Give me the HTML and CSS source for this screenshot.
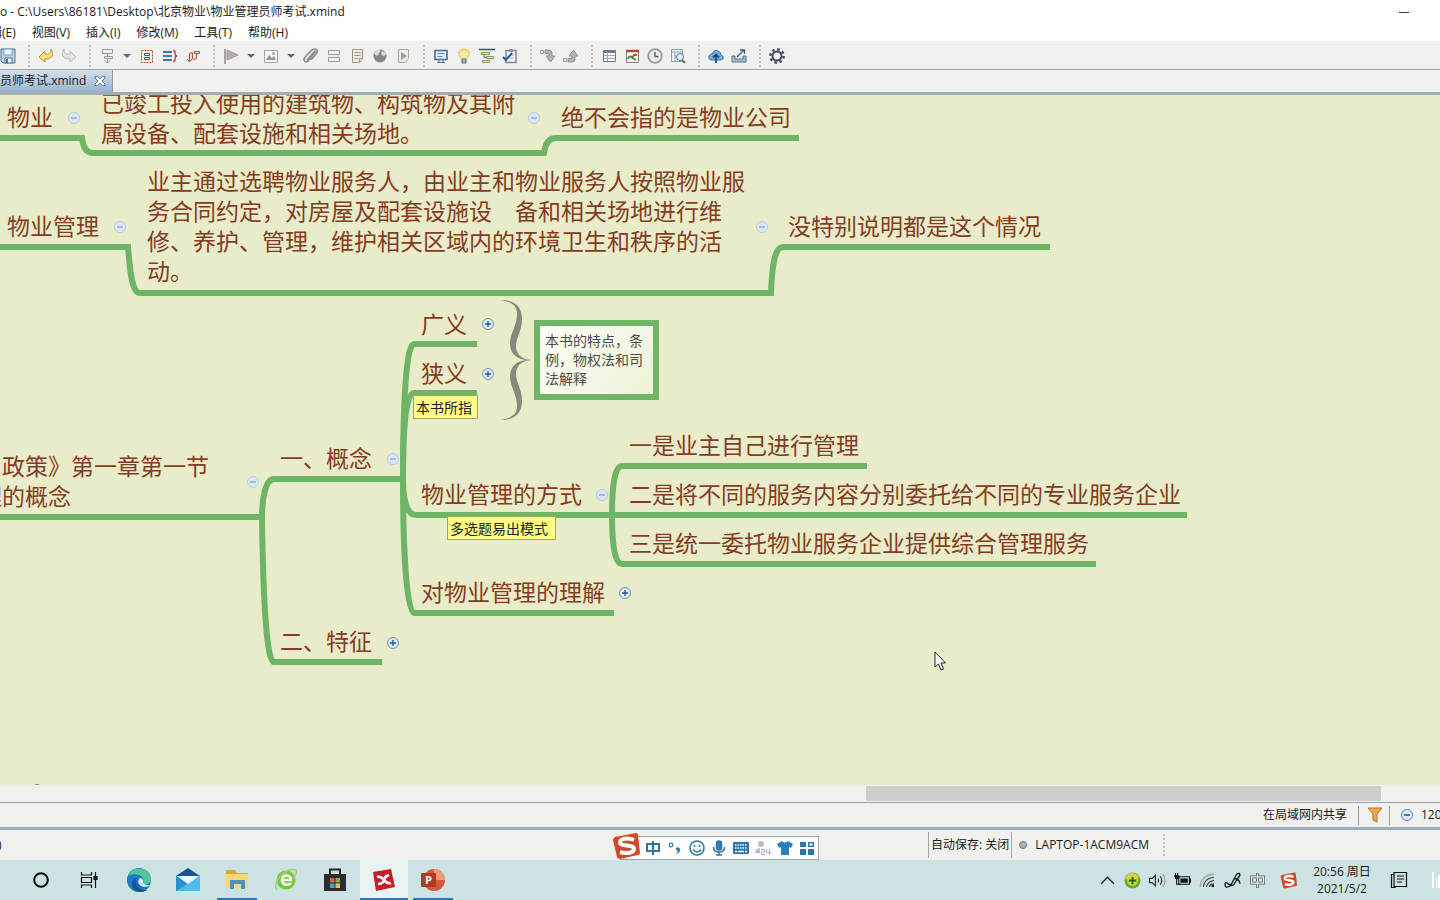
FILE: index.html
```html
<!DOCTYPE html>
<html lang="zh-CN">
<head>
<meta charset="utf-8">
<title>物业管理员师考试.xmind</title>
<link rel="stylesheet" href="styles.css">
</head>
<body>
<svg class="defs" aria-hidden="true">
  <symbol id="minus" viewBox="0 0 14 14"><circle cx="7" cy="7" r="5.5" fill="#dbe6f2" stroke="#b5cbe8"/><path d="M4 7h6" stroke="#8cabdc" stroke-width="1.4"/></symbol>
  <symbol id="plus" viewBox="0 0 14 14"><circle cx="7" cy="7" r="5.5" fill="#dcebf5" stroke="#6f92bd"/><path d="M4 7h6M7 4v6" stroke="#28508e" stroke-width="1.3"/></symbol>
  <symbol id="sogou" viewBox="0 0 28 28"><path d="M3 5 24 1q2 0 2 2l2 18q0 2-2 2L8 27q-2 0-3-2L1 8q0-2 2-3z" fill="#d2492a"/><path d="M22 8C15 5 7 7 8 11c1 4 14 1 14 6 0 4-8 5-14 3" fill="none" stroke="#fff" stroke-width="4"/></symbol>
</svg>
<div class="app">
  <header class="titlebar">
    <span class="title">o - C:\Users\86181\Desktop\北京物业\物业管理员师考试.xmind</span>
    <button class="minimize" aria-label="最小化"></button>
  </header>
  <nav class="menu">
    <button>编辑(E)</button><button>视图(V)</button><button>插入(I)</button><button>修改(M)</button><button>工具(T)</button><button>帮助(H)</button>
  </nav>
  <div class="toolbar">
    <button aria-label="保存"><svg viewBox="0 0 16 16"><path d="M1 1h14v14H3l-2-2z" fill="#b9cfe3" stroke="#54759b"/><path d="M4 1h8v6H4z" fill="#f5f8fb" stroke="#7f98b4"/><path d="M5 10h7v5H5z" fill="#e6edf4" stroke="#54759b"/><path d="M6 11h2v4H6z" fill="#54759b"/></svg></button>
    <i class="sep"></i>
    <button aria-label="撤销"><svg viewBox="0 0 16 16"><path d="M1 9l6-6v3c4 1 6-1 6-5 3 5 2 10-6 10v3z" fill="#f8e27a" stroke="#b8902f"/></svg></button>
    <button aria-label="重做"><svg viewBox="0 0 16 16"><path d="M15 9L9 3v3C5 7 3 5 3 1c-3 5-2 10 6 10v3z" fill="#e2e2e0" stroke="#b9b9b7"/></svg></button>
    <i class="sep"></i>
    <button aria-label="主题"><svg viewBox="0 0 16 16" fill="none" stroke="#999"><path d="M3.500 1.500h10v4h-10zM5.500 8.500h8v2h-8zM8.500 5.500v3M8.500 10.500v4M5.500 12l3 3 3-3"/></svg></button>
    <button class="drop" aria-label="主题选项"></button>
    <button aria-label="外框"><svg viewBox="0 0 16 16" fill="none"><path d="M2.500 2.500h11v12h-11z" stroke="#b24b35" stroke-dasharray="2 1"/><path d="M5.500 5.500h5v2h-5zM5.500 9.500h5v2h-5z" stroke="#4a5f76"/></svg></button>
    <button aria-label="概要"><svg viewBox="0 0 16 16" fill="none"><path d="M1 4h9M1 8h9M1 12h9" stroke="#4a76a8" stroke-width="2"/><path d="M11 2.500q2 0 2 2v1q0 2 2 2.500-2 .5-2 2.500v1q0 2-2 2" stroke="#c43d68" stroke-width="1.5"/></svg></button>
    <button aria-label="联系"><svg viewBox="0 0 16 16" fill="none"><path d="M4.500 13V7q.5-3 3-2v5q2 3 4 0V6" stroke="#c04a38" stroke-width="1.200"/><path d="M2 11l2.500 3L7 11" stroke="#c04a38"/><path d="M9.500 3.500h5v2h-5z" stroke="#596b80"/></svg></button>
    <i class="sep"></i>
    <button aria-label="标记"><svg viewBox="0 0 16 16"><path d="M2 1v15" stroke="#a7a19f" stroke-width="2"/><path d="M4 2l11 5-11 5z" fill="#b9abab" stroke="#a79c9b"/></svg></button>
    <button class="drop" aria-label="标记选项"></button>
    <button aria-label="图片"><svg viewBox="0 0 16 16"><path d="M1.500 2.500h13v12h-13z" fill="#f5f5f4" stroke="#a0a5a8"/><path d="M3 12l3-5 3 3 2-2 2 4z" fill="#8e959a"/><circle cx="10.500" cy="5.500" r="1.500" fill="#a0a5a8"/></svg></button>
    <button class="drop" aria-label="图片选项"></button>
    <button aria-label="附件"><svg viewBox="0 0 16 16" fill="none" stroke="#8f8f8f" stroke-width="1.700"><path d="M4 12l7-8q2-2 1 0l-7 9q-3 2-4-1 0-2 2-4l6-6q3-2 5 0 1 2-1 4l-5 6"/></svg></button>
    <button aria-label="标签"><svg viewBox="0 0 16 16" fill="none" stroke="#999"><path d="M2.500 2.500h11v4h-11zM2.500 9.500h11v4h-11z"/></svg></button>
    <button aria-label="备注"><svg viewBox="0 0 16 16" fill="#efece0" stroke="#9b978a"><path d="M3.500 1.500h10v9l-3 4h-7zM5.500 4.500h6M5.500 7.500h6M5.500 10.500h4M10.500 14v-3.500h3"/></svg></button>
    <button aria-label="超链接"><svg viewBox="0 0 16 16"><circle cx="8" cy="8" r="6.500" fill="#858789"/><path d="M3 4q2-3 5-2 1 2-1 3L6 8 3 7zM10 3q4 1 4 4l-3 1-2-2z" fill="#d8d8d7"/></svg></button>
    <button aria-label="录音"><svg viewBox="0 0 16 16"><path d="M3.500 1.500h10v9l-3 4h-7z" fill="#eeece5" stroke="#aaa79f"/><path d="M6 4l6 4-6 4z" fill="#9c9c98"/></svg></button>
    <i class="sep"></i>
    <button aria-label="演示"><svg viewBox="0 0 16 16"><path d="M2 2.500h12v9H2z" fill="#e4edf8" stroke="#4e6a93" stroke-width="1.600"/><path d="M4.500 5.500h7M4.500 8.500h5" stroke="#5c82b5"/><path d="M6 12v2M10 12v2M4 14.500h8" stroke="#4e6a93" fill="none"/></svg></button>
    <button aria-label="头脑风暴"><svg viewBox="0 0 16 16"><path d="M6 11C1 8 2 1 8 1s7 7 2 10z" fill="#fae9a0" stroke="#e8b94b"/><path d="M6 11h4v4H6zM6 13h4" fill="#ddd" stroke="#5b6678"/></svg></button>
    <button aria-label="甘特图"><svg viewBox="0 0 16 16" fill="#f3f5c6"><path d="M0 1.500h16" stroke="#34516f" stroke-width="1.500"/><path d="M2.500 4.500h8v2h-8zM7.500 8.500h7v2h-7zM3.500 12.500h7v2h-7z" stroke="#83975b"/><path d="M5 6.500v3h2" stroke="#4c7090" fill="none"/></svg></button>
    <button aria-label="任务"><svg viewBox="0 0 16 16"><path d="M4 2.500h10v12H4z" fill="#f1f3f5" stroke="#7f8990" stroke-width="1.500"/><path d="M7 1h4v3H7z" fill="#8b939b"/><path d="M8 7h4M8 10h4" stroke="#a5adb4"/><path d="M1 9l3 3 6-7" fill="none" stroke="#245b98" stroke-width="2"/></svg></button>
    <i class="sep"></i>
    <button aria-label="下钻"><svg viewBox="0 0 16 16"><path d="M.5 2.500h3v3h-3z" fill="none" stroke="#999"/><path d="M5 2h4q3 0 3 3v3h3l-4.500 6L6 8h3V5.500H5z" fill="#b1b4b1" stroke="#8f938f"/></svg></button>
    <button aria-label="上钻"><svg viewBox="0 0 16 16"><path d="M.5 10.500h3v3h-3z" fill="none" stroke="#999"/><path d="M5 14h4q3 0 3-3V8h3l-4.500-6L6 8h3v2.500H5z" fill="#b1b4b1" stroke="#8f938f"/></svg></button>
    <i class="sep"></i>
    <button aria-label="大纲"><svg viewBox="0 0 16 16"><path d="M2.500 2.500h12v11h-12z" fill="#fbfbfb" stroke="#6d7a89"/><path d="M2 4h13" stroke="#6d7a89" stroke-width="2"/><path d="M3 7.500h11M3 10.500h11M6.500 4v9" stroke="#97a8b8"/></svg></button>
    <button aria-label="风格"><svg viewBox="0 0 16 16"><path d="M2.500 2.500h12v12h-12z" fill="#faf9f2" stroke="#8c8069"/><path d="M2 3h13" stroke="#b5482f" stroke-width="2.500"/><path d="M4 11q1-4 4-2l4-3M7 9l5 3" stroke="#3b8750" stroke-width="1.800" fill="none"/><path d="M9 6h4v2H9z" fill="#c1563b"/></svg></button>
    <button aria-label="历史"><svg viewBox="0 0 16 16"><circle cx="8" cy="8" r="6.800" fill="#ececeb" stroke="#999b9c" stroke-width="1.800"/><path d="M8 4v4.500h3.500" stroke="#555" fill="none" stroke-width="1.300"/></svg></button>
    <button aria-label="查找"><svg viewBox="0 0 16 16"><path d="M1.500 1.500h11v12h-11zM2 4h10M5 4v9M5 8h5" fill="#f5f8fa" stroke="#8c9bab"/><circle cx="10" cy="9" r="3.500" fill="#e4f0f8" stroke="#54759b"/><path d="M12 12l3 3" stroke="#7c5f52" stroke-width="1.800"/></svg></button>
    <i class="sep"></i>
    <button aria-label="上传"><svg viewBox="0 0 16 16"><path d="M4 12Q0 12 1 8q1-2 3-2 2-5 6-3 3 1 3 4 3 1 2 4-1 1-3 1z" fill="#74aed9" stroke="#3d75a4"/><path d="M8 15V7M5 9.500l3-3 3 3" fill="none" stroke="#174c7c" stroke-width="1.800"/></svg></button>
    <button aria-label="分享"><svg viewBox="0 0 16 16" fill="none"><path d="M1 8v6h14V8h-3v3H4V8z" fill="#a5bbcd" stroke="#58728c"/><path d="M6 9l7-7M9 2h4.500v4" stroke="#405b76" stroke-width="1.300"/></svg></button>
    <i class="sep"></i>
    <button aria-label="设置"><svg viewBox="0 0 16 16" fill="none" stroke="#3b4a60"><circle cx="8" cy="8" r="4.500" stroke-width="2"/><circle cx="8" cy="8" r="6.700" stroke-width="2.400" stroke-dasharray="2.600 2.660"/></svg></button>
  </div>
  <div class="tabs">
    <div class="tab"><span>员师考试.xmind</span><button aria-label="关闭"><svg viewBox="0 0 12 12"><path d="M1 1.500h2.500L6 4l2.500-2.500H11V3L8 6l3 3v1.500H8.500L6 8l-2.500 2.500H1V9l3-3-3-3z" fill="#fff" stroke="#5e6b78"/></svg></button></div>
  </div>
  <main class="canvas">
    <svg class="links" aria-hidden="true"><g transform="translate(0 -95)">
      <g fill="none" stroke="#6fb566" stroke-width="6">
        <path d="M0 138H82C83 147 86 153 93 153H544C545 145 548 138 556 138H799"/>
        <path d="M0 247H128C130 272 132 293 140 293H771C772 268 774 247 783 247H1050"/>
        <path d="M0 517H262C262 500 265 479 274 479H403"/>
        <path d="M262 517C263 590 266 662 274 662H382"/>
        <path d="M403 479C403 420 405 344 414 344H477"/>
        <path d="M403 479C403 435 405 393 414 393H477"/>
        <path d="M403 479C403 500 407 515 416 515H1187"/>
        <path d="M403 479C403 540 406 613 414 613H614"/>
        <path d="M867 466H622C614 466 612 490 612 515C612 540 614 564 622 564H1096"/>
      </g>
      <g fill="#858b7c">
        <path d="M501 300C516 300 522 308 522 319C522 331 516 338 516 346C516 355 522 359 531 360C518 361 510 354 510 344C510 333 517 326 517 314C517 306 512 302 501 300Z"/>
        <path d="M501 420C516 420 522 412 522 401C522 389 516 382 516 374C516 365 522 361 531 360C518 359 510 366 510 376C510 387 517 394 517 406C517 414 512 418 501 420Z"/>
      </g>
      <path d="M34 785q3-2 6 0z" fill="#8a8c70"/>
    </g></svg>

    <div class="node n1">物业</div>
    <div class="node n2">已竣工投入使用的建筑物、构筑物及其附<br>属设备、配套设施和相关场地。</div>
    <div class="node n3">绝不会指的是物业公司</div>
    <div class="node n4">物业管理</div>
    <div class="node n5">业主通过选聘物业服务人，由业主和物业服务人按照物业服<br>务合同约定，对房屋及配套设施设　备和相关场地进行维<br>修、养护、管理，维护相关区域内的环境卫生和秩序的活<br>动。</div>
    <div class="node n6">没特别说明都是这个情况</div>
    <div class="node n7">与政策》第一章第一节<br>理的概念</div>
    <div class="node n8">一、概念</div>
    <div class="node n9">二、特征</div>
    <div class="node n10">广义</div>
    <div class="node n11">狭义</div>
    <div class="node n12">物业管理的方式</div>
    <div class="node n13">对物业管理的理解</div>
    <div class="node n14">一是业主自己进行管理</div>
    <div class="node n15">二是将不同的服务内容分别委托给不同的专业服务企业</div>
    <div class="node n16">三是统一委托物业服务企业提供综合管理服务</div>
    <div class="summary">本书的特点，条<br>例，物权法和司<br>法解释</div>
    <div class="label l1">本书所指</div>
    <div class="label l2">多选题易出模式</div>

    <button class="fold f1" aria-label="收起"><svg><use href="#minus"/></svg></button>
    <button class="fold f2" aria-label="收起"><svg><use href="#minus"/></svg></button>
    <button class="fold f3" aria-label="收起"><svg><use href="#minus"/></svg></button>
    <button class="fold f4" aria-label="收起"><svg><use href="#minus"/></svg></button>
    <button class="fold f5" aria-label="收起"><svg><use href="#minus"/></svg></button>
    <button class="fold f6" aria-label="收起"><svg><use href="#minus"/></svg></button>
    <button class="fold f7" aria-label="收起"><svg><use href="#minus"/></svg></button>
    <button class="fold f8" aria-label="展开"><svg><use href="#plus"/></svg></button>
    <button class="fold f9" aria-label="展开"><svg><use href="#plus"/></svg></button>
    <button class="fold f10" aria-label="展开"><svg><use href="#plus"/></svg></button>
    <button class="fold f11" aria-label="展开"><svg><use href="#plus"/></svg></button>
    <svg class="cursor" viewBox="0 0 13 20"><path d="M1 1v15l3.500-3 2.500 6 2.500-1-2.500-6h4.500z" fill="#fff" stroke="#222"/></svg>
  </main>
  <div class="scroll"><div class="thumb"></div></div>
  <div class="status">
    <span>在局域网内共享</span><i class="rule"></i>
    <button class="filter" aria-label="筛选"><svg viewBox="0 0 16 16"><path d="M1 1h14l-5 6v8l-4-2V7z" fill="#f0a44b" stroke="#b8732c"/></svg></button>
    <i class="rule"></i>
    <button class="zoomout" aria-label="缩小"><svg viewBox="0 0 14 14"><circle cx="7" cy="7" r="5.500" fill="#dcebf5" stroke="#6386ab"/><path d="M4 7h6" stroke="#28508e" stroke-width="1.500"/></svg></button>
    <span class="percent">120%</span>
  </div>
  <div class="status2">
    <span class="tail">)</span>
    <span class="autosave">自动保存: 关闭</span>
    <i class="dot"></i><span>LAPTOP-1ACM9ACM</span><i class="sep end"></i>
  </div>
  <footer class="taskbar">
    <button aria-label="Cortana"><svg viewBox="0 0 24 24"><circle cx="12" cy="12" r="6.800" fill="none" stroke="#111" stroke-width="2"/></svg></button>
    <button aria-label="任务视图"><svg viewBox="0 0 24 24" fill="none" stroke="#111" stroke-width="1.200"><path d="M3.500 4v3h10V4M3.500 20v-3h10v3M3.500 9.500h10v5h-10zM17.500 4v4M17.500 12v8"/><path d="M16 8.500h3v3h-3z" fill="#111"/></svg></button>
    <button aria-label="Edge"><svg viewBox="0 0 24 24"><circle cx="12" cy="12" r="12" fill="#1c74bd"/><path d="M1 9C3-2 21-3 24 10c1 5-4 7-8 6 2-5-1-9-6-9-4 0-7 1-9 2z" fill="#4fc79a"/><path d="M1 8c4-3 11-3 13 2-5-1-7 4-5 8 2 5 8 6 12 3C14 28-2 23 1 8z" fill="#1e7cc6"/><path d="M10 10c-3 5 1 13 10 12-7 4-15 1-15-6 0-4 2-6 5-6z" fill="#155496"/><path d="M14 10c-4 0-4 8 3 9 3 0 5-1 6-2-2 0-5 0-7-2 1-2 0-4-2-5z" fill="#d2e8ea"/></svg></button>
    <button aria-label="邮件"><svg viewBox="0 0 24 24"><path d="M0 8 12 0l12 8z" fill="#175394"/><path d="M0 8h24v15H0z" fill="#3aa9e0"/><path d="M0 8l24 15H0z" fill="#2a8fcf"/><path d="M24 8L0 23h24z" fill="#4fbdec"/><path d="M1 8h22L12 16z" fill="#eef5f8"/></svg></button>
    <button class="running" aria-label="文件资源管理器"><svg viewBox="0 0 24 24"><path d="M1 2h9l2 3h11v15H1z" fill="#dba73c"/><path d="M1 6h22v14H1z" fill="#f8d775"/><path d="M5 21v-9h15v9h-4v-5H9v5z" fill="#4c91c3"/></svg></button>
    <button aria-label="360浏览器"><svg viewBox="0 0 24 24"><circle cx="12" cy="12" r="9.500" fill="#75c83b"/><path d="M3 22C-3 15 12-2 22 2c2 2-2 7-4 9" fill="none" stroke="#9bd46c" stroke-width="1.500"/><path d="M8 12h9c0-6-9-6-9 0 0 5 6 6 9 3" fill="none" stroke="#fff" stroke-width="2.400"/></svg></button>
    <button aria-label="应用商店"><svg viewBox="0 0 24 24"><path d="M7 6V1.500h10V6" fill="none" stroke="#222" stroke-width="2"/><path d="M1 6h22v17H1z" fill="#2b2e2c"/><path d="M7 10h4.500v4.500H7z" fill="#d8663b"/><path d="M12.500 10H17v4.500h-4.500z" fill="#7eb54a"/><path d="M7 15.500h4.500V20H7z" fill="#4c9fd0"/><path d="M12.500 15.500H17V20h-4.500z" fill="#e8c250"/></svg></button>
    <button class="running active" aria-label="XMind"><svg viewBox="0 0 24 24"><path d="M1 4l18-3 4 18-19 4z" fill="#c5202a"/><path d="M5 9q4-1 7 3t7 3M17 7q-4 1-5 5t-6 4" fill="none" stroke="#fff" stroke-width="2.600"/></svg></button>
    <button class="running" aria-label="PowerPoint"><svg viewBox="0 0 24 24"><circle cx="13" cy="12" r="11" fill="#d9573a"/><path d="M13 1a11 11 0 0 1 11 11H13z" fill="#f09a7c"/><rect y="5" width="15" height="14" rx="1" fill="#b33a22"/><text x="4" y="16" class="ppt">P</text></svg></button>
    <div class="tray">
      <button aria-label="显示隐藏的图标"><svg viewBox="0 0 16 16"><path d="M2 11l6-6 6 6" fill="none" stroke="#222" stroke-width="1.300"/></svg></button>
      <button aria-label="安全卫士"><svg viewBox="0 0 16 16"><circle cx="8" cy="8" r="7.500" fill="#5fae35"/><path d="M1 6Q6-3 14 4q-2 8-13 2z" fill="#e3cd3a"/><circle cx="8" cy="8" r="5" fill="#d8d32f"/><path d="M4.500 8h7M8 4.500v7" stroke="#1e692b" stroke-width="1.800"/></svg></button>
      <button aria-label="音量"><svg viewBox="0 0 16 16" fill="none" stroke="#222"><path d="M.5 6h2.500l3-3v10l-3-3H.5zM8.500 6q1 2 0 4M10.500 4q3 4 0 8"/><path d="M13 2q4 6 0 12" stroke="#999"/></svg></button>
      <button aria-label="电源"><svg viewBox="0 0 16 16"><path d="M4.500 4.500h10v7h-10z" fill="none" stroke="#111"/><path d="M6 6h7v4H6zM15 6h1v4h-1zM0 3h5v3Q3 8 1 6zM2 7h1v4h3v1H2zM1 1h1v2H1zM3 1h1v2H3z" fill="#111"/></svg></button>
      <button aria-label="网络"><svg viewBox="0 0 16 16" fill="none"><path d="M1 14Q2 3 14 2" stroke="#999"/><path d="M4 14q1-8 10-9M7 14q1-5 7-6M10 14q0-3 4-3" stroke="#333"/><circle cx="13" cy="13" r="1.300" fill="#111"/></svg></button>
      <button aria-label="手写笔"><svg viewBox="0 0 16 16" fill="none" stroke="#111" stroke-width="1.200"><path d="M5 12Q1 8 1 12t5 1L12 2q3-2 3 1L9 12q-3 2-2-1zM10 6q5 1 5 5"/></svg></button>
      <button aria-label="输入法"><svg viewBox="0 0 16 16" fill="none"><path d="M2.500 4.500h11v6h-11zM8 1v14" stroke="#555" stroke-width="2.600"/><path d="M2.500 4.500h11v6h-11zM8 1.500v13" stroke="#eef4f4" stroke-width="1.200"/></svg></button>
      <button class="ime-tray" aria-label="搜狗输入法"><svg><use href="#sogou"/></svg></button>
      <div class="clock"><time>20:56 周日</time><time>2021/5/2</time></div>
      <button class="notice" aria-label="通知"><svg viewBox="0 0 18 18" fill="none" stroke="#111" stroke-width="1.200"><path d="M4 1.500h12.500v14H4zM4 3.500H1.500v13H5v-1M7 5h7M7 8h7M7 11h5"/></svg></button>
      <div class="edge"><svg viewBox="0 0 8 16"><path d="M0 0h2v16H0zM4 6h1v10H4zM6 3h2v13H6z" fill="#fff"/></svg></div>
    </div>
  </footer>
  <div class="ime">
    <svg class="logo"><use href="#sogou"/></svg>
    <div class="ime-bar">
      <button aria-label="中文"><svg viewBox="0 0 16 16" fill="none" stroke="#2f74a8" stroke-width="2"><path d="M2 4h12v7H2zM8 1v14"/></svg></button>
      <button aria-label="标点"><svg viewBox="0 0 16 16"><circle cx="4" cy="5" r="1.800" fill="none" stroke="#2f74a8" stroke-width="1.200"/><path d="M9 8q4-2 4 2 0 3-4 4 2-2 2-3-2 0-2-3z" fill="#2f74a8"/></svg></button>
      <button aria-label="表情"><svg viewBox="0 0 16 16" fill="none" stroke="#2f74a8" stroke-width="1.600"><circle cx="8" cy="8" r="7"/><path d="M5.500 5v2M10.500 5v2M4 9.500q4 5 8 0"/></svg></button>
      <button aria-label="语音"><svg viewBox="0 0 16 16" fill="none" stroke="#2f74a8" stroke-width="1.500"><rect x="5.500" y="1" width="5" height="9" rx="2.500" fill="#2a80bd"/><path d="M2.500 7q0 5 5.500 5t5.500-5M8 12v3M5 15h6"/></svg></button>
      <button aria-label="键盘"><svg viewBox="0 0 16 16"><rect x="0" y="2" width="16" height="12" rx="1" fill="#2f74a8"/><path d="M2 5h12M2 8h12" stroke="#fff" stroke-width="1.500" stroke-dasharray="1.500 1"/><path d="M2 11.500h2M5 11.500h6M12 11.500h2" stroke="#fff" stroke-width="1.500"/></svg></button>
      <button aria-label="用户"><svg viewBox="0 0 16 16"><circle cx="6" cy="4" r="3" fill="#b9bcc2"/><path d="M0 13q0-5 6-5 4 0 4 3v2z" fill="#b9bcc2"/><path d="M5 8h11v8H5z" fill="#fff"/><path d="M6 9.500h3.500v2.500H6.500v2.500H10M14.500 9v6M11.500 9v3.500H16" stroke="#aeb1b8" fill="none"/></svg></button>
      <button aria-label="皮肤"><svg viewBox="0 0 16 16"><path d="M5 1q3 3 6 0l5 3-2 4-2-1v8H4V7L2 8 0 4z" fill="#2a80bd"/></svg></button>
      <button aria-label="工具箱"><svg viewBox="0 0 16 16" fill="#2f74a8"><path d="M1 2h6v5H1zM1 9h6v6H1zM9 9h6v6H9z"/><path d="M9.700 2.700h4.600v3.600H9.700z" fill="none" stroke="#2f74a8" stroke-width="1.400"/></svg></button>
    </div>
  </div>
</div>
</body>
</html>
```

FILE: styles.css
```css
* { box-sizing: border-box; }
body {
  margin: 0;
  font: 12px/16px "Open Sans", "Noto Sans CJK SC", sans-serif;
  color: #1b1b1b;
}
button {
  display: flex;
  align-items: center;
  justify-content: center;
  padding: 0;
  border: 0;
  background: none;
  font: inherit;
  color: inherit;
  flex: none;
}
.defs { display: none; }
.app {
  position: relative;
  display: flex;
  flex-direction: column;
  height: 100vh;
  overflow: hidden;
  background: #f0f0ee;
}

.titlebar {
  display: flex;
  align-items: center;
  justify-content: space-between;
  height: 24px;
  padding-right: 31px;
  background: #fefefd;
}
.title { white-space: nowrap; }
.minimize { width: 10px; height: 10px; }
.minimize::before { content: ""; width: 10px; height: 1px; background: #333; }
.menu {
  display: flex;
  gap: 16px;
  height: 17px;
  margin-left: -22px;
  background: #fefefd;
}
.menu button { white-space: nowrap; }

.toolbar {
  display: flex;
  align-items: center;
  height: 29px;
  border-bottom: 1px solid #a2a6a6;
  padding-top: 1px;
  overflow: hidden;
}
.toolbar button { width: 23px; height: 24px; }
.toolbar button:first-child { margin-left: -4px; }
.toolbar svg { width: 16px; height: 16px; }
.toolbar .drop { width: 17px; }
.drop::before {
  content: "";
  border: 4px solid transparent;
  border-top-color: #666;
  border-bottom: 0;
}
.sep {
  flex: none;
  width: 2px;
  height: 22px;
  margin: 0 4px 0 9px;
  background: repeating-linear-gradient(#c0c0bf 0 2px, transparent 2px 4px);
}

.tabs {
  display: flex;
  height: 25px;
  border-bottom: 3px solid #a2adb0;
}
.tab {
  display: flex;
  align-items: center;
  gap: 8px;
  padding-right: 6px;
  border-right: 1px solid #8c9cac;
  background: linear-gradient(#d3e0ec, #98b4d1);
  white-space: nowrap;
}
.tab svg { width: 12px; height: 12px; }

.canvas {
  position: relative;
  flex: 1;
  overflow: hidden;
  background: #e8ecc9;
}
.links { position: absolute; inset: 0; width: 100%; height: 100%; overflow: visible; }
.node {
  position: absolute;
  font: 23px/30px "Noto Sans CJK SC", sans-serif;
  color: #863c22;
  white-space: nowrap;
}
.n1 { left: 7px; top: 6px; }
.n2 { left: 101px; top: -8px; }
.n3 { left: 561px; top: 6px; }
.n4 { left: 7px; top: 115px; }
.n5 { left: 147px; top: 70px; }
.n6 { left: 788px; top: 115px; }
.n7 { left: -21px; top: 355px; }
.n8 { left: 280px; top: 347px; }
.n9 { left: 280px; top: 530px; }
.n10 { left: 421px; top: 213px; }
.n11 { left: 421px; top: 262px; }
.n12 { left: 421px; top: 383px; }
.n13 { left: 421px; top: 481px; }
.n14 { left: 629px; top: 334px; }
.n15 { left: 629px; top: 383px; }
.n16 { left: 629px; top: 432px; }

.summary {
  position: absolute;
  left: 534px;
  top: 225px;
  padding: 5px;
  width: 125px;
  height: 80px;
  border: 6px solid #6fb566;
  background: linear-gradient(135deg, #fdfdf8, #edf2d6);
  font: 14px/19px "Noto Sans CJK SC", sans-serif;
  color: #4c4c48;
  white-space: nowrap;
}
.label {
  position: absolute;
  padding-left: 2px;
  border: 1px solid #a8a468;
  background: #fdfc87;
  font: 14px/22px "Noto Sans CJK SC", sans-serif;
  color: #222;
  white-space: nowrap;
}
.l1 { left: 413px; top: 300px; width: 65px; }
.l2 { left: 447px; top: 421px; width: 109px; }

.fold { position: absolute; width: 14px; height: 14px; }
.fold svg { width: 14px; height: 14px; }
.f1 { left: 67px; top: 16px; }
.f2 { left: 527px; top: 16px; }
.f3 { left: 113px; top: 125px; }
.f4 { left: 755px; top: 125px; }
.f5 { left: 246px; top: 380px; }
.f6 { left: 386px; top: 357px; }
.f7 { left: 595px; top: 393px; }
.f8 { left: 481px; top: 222px; }
.f9 { left: 481px; top: 272px; }
.f10 { left: 618px; top: 491px; }
.f11 { left: 386px; top: 541px; }
.cursor { position: absolute; left: 934px; top: 556px; width: 13px; height: 20px; }

.scroll {
  display: flex;
  justify-content: flex-end;
  height: 18px;
  padding: 1px 59px 1px 0;
  border-bottom: 1px solid #a0a2a2;
}
.thumb { width: 37.3%; background: #cdcdcc; }

.status {
  display: flex;
  align-items: center;
  justify-content: flex-end;
  height: 27px;
  border-bottom: 3px solid #9badbb;
  overflow: hidden;
}
.rule { width: 1px; height: 19px; background: #999; margin-left: 11px; }
.filter { margin-left: 8px; }
.filter svg { width: 16px; height: 16px; }
.filter + .rule { margin-left: 6px; }
.zoomout { margin-left: 10px; }
.zoomout svg { width: 14px; height: 14px; }
.percent { width: 19px; margin-left: 7px; overflow: hidden; }

.status2 {
  display: flex;
  align-items: center;
  height: 30px;
  padding-right: 275px;
}
.tail { margin-left: -2px; }
.autosave {
  margin-left: auto;
  padding: 5px 2px;
  border: solid #a5a5a5;
  border-width: 0 1px;
}
.dot {
  width: 8px;
  height: 8px;
  margin: 0 8px 0 7px;
  border: 1px solid #777;
  border-radius: 50%;
  background: #b6adb4;
}
.end { margin: 0 0 0 14px; }

.taskbar {
  display: flex;
  height: 40px;
  padding-left: 17px;
  gap: 1px;
  background: #cde2e2;
}
.taskbar > button { position: relative; width: 48px; }
.taskbar > button svg { width: 24px; height: 24px; }
.running::after {
  content: "";
  position: absolute;
  left: 4px;
  right: 4px;
  bottom: 0;
  height: 2px;
  background: #2878b8;
}
.active { background: #e8f3f4; }
.active::after { left: 0; right: 0; }
.ppt { font: bold 11px "Open Sans", sans-serif; fill: #fff; }
.tray { display: flex; align-items: stretch; margin-left: auto; }
.tray button { width: 25px; }
.tray button svg { width: 17px; height: 17px; }
.tray .ime-tray { width: 36px; }
.clock {
  display: flex;
  flex-direction: column;
  justify-content: center;
  width: 72px;
  line-height: 17px;
  text-align: center;
}
.tray .notice { width: 42px; }
.tray .notice svg { width: 18px; height: 18px; }
.edge { display: flex; align-items: center; justify-content: flex-end; width: 20px; }
.edge svg { width: 8px; height: 16px; }

.ime {
  position: absolute;
  left: 612px;
  bottom: 40px;
  display: flex;
  align-items: flex-end;
}
.logo { z-index: 1; width: 28px; height: 28px; }
.ime-bar {
  display: flex;
  align-items: center;
  gap: 6px;
  height: 24px;
  margin-left: -20px;
  padding: 0 3px 0 24px;
  border: 1px solid #9aa5ad;
  background: #fff;
}
.ime-bar svg { width: 16px; height: 16px; }
```
